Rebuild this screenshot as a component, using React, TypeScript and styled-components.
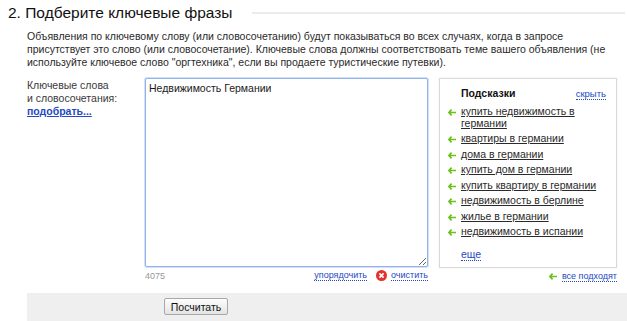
import React from "react";
import styled, { createGlobalStyle } from "styled-components";

const GlobalStyle = createGlobalStyle`
  html, body { margin: 0; padding: 0; background: #fff; }
  body { font-family: "Liberation Sans", Arial, sans-serif; color: #222; }
`;

const hints = [
  "купить недвижимость в германии",
  "квартиры в германии",
  "дома в германии",
  "купить дом в германии",
  "купить квартиру в германии",
  "недвижимость в берлине",
  "жилье в германии",
  "недвижимость в испании",
];

const Arrow: React.FC = () => (
  <svg width="8" height="7" viewBox="0 0 8 7" style={{ display: "block" }}>
    <path d="M3.6 0.6 L0.9 3.5 L3.6 6.4 M0.9 3.5 H8" stroke="#6cc01a" strokeWidth="1.7" fill="none" />
  </svg>
);

const ClearIcon: React.FC = () => (
  <svg width="11" height="11" viewBox="0 0 11 11" style={{ display: "block" }}>
    <circle cx="5.5" cy="5.5" r="5.5" fill="#e8302a" />
    <path d="M3.4 3.4 L7.6 7.6 M7.6 3.4 L3.4 7.6" stroke="#fff" strokeWidth="1.7" />
  </svg>
);

const App: React.FC = () => {
  return (
    <Page>
      <GlobalStyle />
      <Header>
        <Title>2. Подберите ключевые фразы</Title>
        <Rule />
      </Header>

      <Intro>
        Объявления по ключевому слову (или словосочетанию) будут показываться во всех случаях, когда в запросе
        <br />
        присутствует это слово (или словосочетание). Ключевые слова должны соответствовать теме вашего объявления (не
        <br />
        используйте ключевое слово "оргтехника", если вы продаете туристические путевки).
      </Intro>

      <Form>
        <Label>
          Ключевые слова
          <br />
          и словосочетания:
          <br />
          <PickLink>подобрать...</PickLink>
        </Label>

        <EditorColumn>
          <Editor defaultValue="Недвижимость Германии " />
          <EditorFooter>
            <Counter>4075</Counter>
            <Actions>
              <DottedLink>упорядочить</DottedLink>
              <ClearAction>
                <ClearIcon />
                <DottedLink>очистить</DottedLink>
              </ClearAction>
            </Actions>
          </EditorFooter>
        </EditorColumn>

        <HintsColumn>
          <HintsBox>
            <HintsHead>
              <HintsTitle>Подсказки</HintsTitle>
              <HideLink>скрыть</HideLink>
            </HintsHead>
            <HintList>
              {hints.map((h) => (
                <HintItem key={h}>
                  <ArrowSlot>
                    <Arrow />
                  </ArrowSlot>
                  <HintText>{h}</HintText>
                </HintItem>
              ))}
            </HintList>
            <More>еще</More>
          </HintsBox>
          <AllFit>
            <Arrow />
            <DottedLink>все подходят</DottedLink>
          </AllFit>
        </HintsColumn>
      </Form>

      <SubmitBar>
        <SubmitButton>Посчитать</SubmitButton>
      </SubmitBar>
    </Page>
  );
};

export default App;

const Page = styled.div`
  width: 627px;
  height: 321px;
  overflow: hidden;
`;

const Header = styled.div`
  display: flex;
  align-items: center;
  padding: 2px 2px 0 8px;
  height: 22px;
`;

const Title = styled.h2`
  margin: 0;
  font-size: 15.5px;
  font-weight: normal;
  color: #111;
  white-space: nowrap;
`;

const Rule = styled.div`
  flex: 1;
  height: 2px;
  margin-left: 19px;
  background: #ebebeb;
`;

const Intro = styled.p`
  margin: 6px 0 0 27px;
  font-size: 10.5px;
  line-height: 13px;
  color: #2a2a2a;
  white-space: nowrap;
`;

const Form = styled.div`
  display: flex;
  align-items: flex-start;
  margin-top: 9px;
  padding-left: 27px;
`;

const Label = styled.div`
  width: 118px;
  padding-top: 1px;
  font-size: 10.5px;
  line-height: 13px;
  color: #3a3a3a;
`;

const PickLink = styled.a`
  font-weight: bold;
  color: #2349c4;
  text-decoration: underline;
  cursor: pointer;
`;

const EditorColumn = styled.div`
  display: flex;
  flex-direction: column;
  width: 283px;
`;

const Editor = styled.textarea`
  box-sizing: border-box;
  display: block;
  width: 283px;
  height: 189px;
  margin: 0;
  padding: 3px 3px;
  border: 1px solid #93b3e8;
  border-radius: 2px;
  box-shadow: 0 0 0 1px #d3e1f6;
  outline: none;
  font-family: "Liberation Sans", Arial, sans-serif;
  font-size: 10.5px;
  line-height: 12px;
  color: #1a1a1a;
`;

const EditorFooter = styled.div`
  display: flex;
  justify-content: space-between;
  align-items: center;
  margin-top: 2px;
  height: 13px;
  font-size: 9px;
`;

const Counter = styled.span`
  color: #999;
  font-size: 9px;
`;

const Actions = styled.div`
  display: flex;
  align-items: center;
  gap: 9px;
`;

const ClearAction = styled.span`
  display: flex;
  align-items: center;
  gap: 4px;
`;

const DottedLink = styled.a`
  color: #2349c4;
  font-size: 9px;
  line-height: 10px;
  text-decoration: none;
  border-bottom: 1px dotted #2349c4;
  cursor: pointer;
`;

const HideLink = styled(DottedLink)`
  font-size: 9.5px;
`;

const HintsColumn = styled.div`
  display: flex;
  flex-direction: column;
  align-items: flex-end;
  margin-left: 11px;
  width: 178px;
`;

const HintsBox = styled.div`
  box-sizing: border-box;
  width: 178px;
  height: 190px;
  border: 1px solid #dadada;
  box-shadow: 0 0 2px #ececec;
  padding: 8px 10px 0 8px;
`;

const HintsHead = styled.div`
  display: flex;
  justify-content: space-between;
  align-items: baseline;
  height: 12px;
  line-height: 12px;
  padding-left: 13px;
  margin-bottom: 7px;
`;

const HintsTitle = styled.span`
  font-size: 10.5px;
  font-weight: bold;
  color: #111;
`;

const HintList = styled.ul`
  list-style: none;
  margin: 0;
  padding: 0;
`;

const HintItem = styled.li`
  display: flex;
  align-items: flex-start;
  margin-bottom: 4px;
  font-size: 10.5px;
  line-height: 11.5px;
`;

const ArrowSlot = styled.span`
  width: 13px;
  flex: none;
  padding-top: 3px;
`;

const HintText = styled.a`
  color: #2a2a2a;
  text-decoration: underline;
  cursor: pointer;
`;

const More = styled(DottedLink)`
  display: inline-block;
  margin: 6px 0 0 13px;
  font-size: 10.5px;
  line-height: 12px;
`;

const AllFit = styled.div`
  display: flex;
  align-items: center;
  gap: 5px;
  margin-top: 2px;
  height: 13px;
`;

const SubmitBar = styled.div`
  box-sizing: border-box;
  margin: 10px 0 0 27px;
  height: 30px;
  background: #efefef;
  display: flex;
  align-items: flex-start;
  padding: 5px 0 0 137px;
`;

const SubmitButton = styled.button`
  box-sizing: border-box;
  width: 64px;
  height: 17px;
  padding: 0;
  font-family: "Liberation Sans", Arial, sans-serif;
  font-size: 10.5px;
  color: #111;
  background: linear-gradient(#fdfdfd, #e4e4e4);
  border: 1px solid #a8a8a8;
  border-radius: 2px;
`;
